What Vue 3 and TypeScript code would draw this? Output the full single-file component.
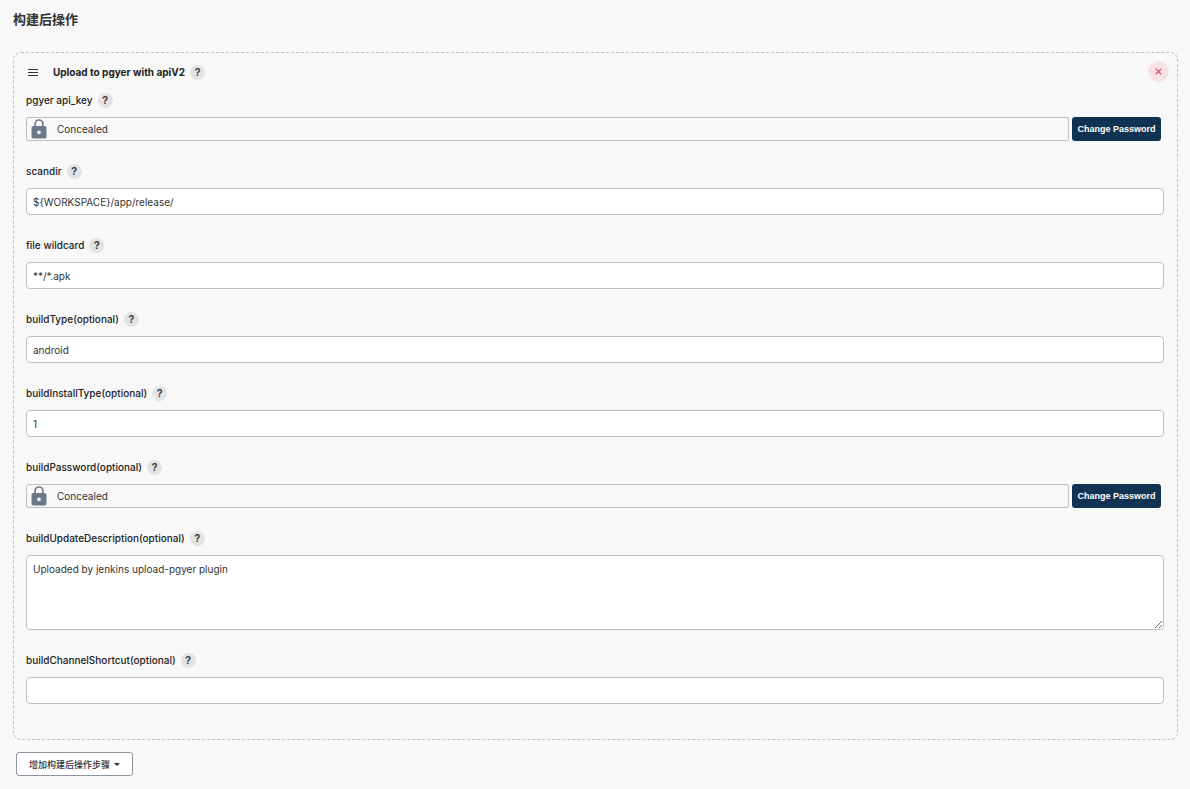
<script setup lang="ts">
import { reactive } from 'vue'

type FieldKind = 'text' | 'secret' | 'textarea'

interface Field {
  id: string
  label: string
  kind: FieldKind
  value: string
}

const fields = reactive<Field[]>([
  { id: 'api-key', label: 'pgyer api_key', kind: 'secret', value: '' },
  { id: 'scandir', label: 'scandir', kind: 'text', value: '${WORKSPACE}/app/release/' },
  { id: 'wildcard', label: 'file wildcard', kind: 'text', value: '**/*.apk' },
  { id: 'build-type', label: 'buildType(optional)', kind: 'text', value: 'android' },
  { id: 'install-type', label: 'buildInstallType(optional)', kind: 'text', value: '1' },
  { id: 'build-password', label: 'buildPassword(optional)', kind: 'secret', value: '' },
  {
    id: 'update-description',
    label: 'buildUpdateDescription(optional)',
    kind: 'textarea',
    value: 'Uploaded by jenkins upload-pgyer plugin',
  },
  { id: 'channel-shortcut', label: 'buildChannelShortcut(optional)', kind: 'text', value: '' },
])
</script>

<template>
  <main class="page">
    <h1 class="page-title">构建后操作</h1>

    <section class="step">
      <header class="step-header">
        <svg class="handle" viewBox="0 0 10 7" aria-hidden="true">
          <path d="M0 .5h10M0 3.5h10M0 6.5h10" stroke="#333" stroke-width="1" />
        </svg>
        <h2 class="step-title">Upload to pgyer with apiV2</h2>
        <button type="button" class="help">?</button>
        <button type="button" class="remove" aria-label="Remove">
          <svg viewBox="0 0 7 7" aria-hidden="true">
            <path d="M.7 .7l5.6 5.6M6.3 .7L.7 6.3" stroke="#dc4450" stroke-width="1.2" />
          </svg>
        </button>
      </header>

      <div v-for="field in fields" :key="field.id" class="field">
        <div class="field-head">
          <label class="field-label" :for="field.id">{{ field.label }}</label>
          <button type="button" class="help">?</button>
        </div>

        <div v-if="field.kind === 'secret'" class="secret">
          <div class="secret-box">
            <svg class="lock" viewBox="0 0 16 20" aria-hidden="true">
              <path
                d="M4.1 8V4.9a3.9 3.9 0 0 1 7.8 0V8"
                fill="none"
                stroke="#6b7889"
                stroke-width="1.6"
              />
              <path
                fill="#6b7889"
                fill-rule="evenodd"
                d="M2.5 7h11a2 2 0 0 1 2 2v8.5a2 2 0 0 1-2 2h-11a2 2 0 0 1-2-2V9a2 2 0 0 1 2-2zM8 11.4a1.9 1.9 0 1 0 0 3.8 1.9 1.9 0 0 0 0-3.8z"
              />
            </svg>
            <span>Concealed</span>
          </div>
          <button :id="field.id" type="button" class="change">Change Password</button>
        </div>
        <textarea
          v-else-if="field.kind === 'textarea'"
          :id="field.id"
          v-model="field.value"
          class="control area"
          spellcheck="false"
        ></textarea>
        <input v-else :id="field.id" v-model="field.value" class="control" type="text" />
      </div>
    </section>

    <button type="button" class="add-step">
      增加构建后操作步骤
      <svg class="caret" viewBox="0 0 6 3" aria-hidden="true">
        <path d="M0 0h6L3 3z" fill="#333" />
      </svg>
    </button>
  </main>
</template>

<style>
body {
  margin: 0;
  background: #f8f8f8;
}
</style>

<style scoped>
.page {
  box-sizing: border-box;
  padding: 10px 12px 13px 13px;
  color: #333;
  font-family: Inter, 'Liberation Sans', 'Noto Sans CJK SC', sans-serif;
  font-size: 10px;
  line-height: 15px;
}

.page-title {
  margin: 0 0 24px;
  font-size: 13px;
  line-height: 18px;
  font-weight: 700;
}

button,
input,
textarea {
  box-sizing: border-box;
  margin: 0;
  font: inherit;
  color: inherit;
}

.step {
  padding: 12px 13px 35px 12px;
  border: 1px dashed #bcc1c9;
  border-radius: 8px;
}

.step-header {
  position: relative;
  display: flex;
  align-items: center;
  height: 15px;
  margin-bottom: 13px;
}

.handle {
  width: 10px;
  height: 7px;
  margin: 0 15px 0 2px;
}

.step-title {
  margin: 0;
  color: #222;
  font-size: 10px;
  line-height: 15px;
  font-weight: 700;
}

.help {
  flex: none;
  width: 15px;
  height: 15px;
  margin-left: 5px;
  padding: 0;
  border: 0;
  border-radius: 50%;
  background: #e3e3e3;
  font-family: 'Liberation Sans', sans-serif;
  font-size: 10px;
  line-height: 15px;
  font-weight: 700;
  text-align: center;
}

.remove {
  position: absolute;
  top: -4px;
  right: -5px;
  display: flex;
  align-items: center;
  justify-content: center;
  width: 21px;
  height: 21px;
  padding: 0;
  border: 0;
  border-radius: 50%;
  background: #f7e3e5;
}

.remove svg {
  width: 7px;
  height: 7px;
}

.field + .field {
  margin-top: 23px;
}

.field-head {
  display: flex;
  align-items: center;
  margin-bottom: 9px;
}

.field-label {
  color: #222;
  font-weight: 500;
}

.control {
  display: block;
  width: 100%;
  height: 27px;
  padding: 1px 6px 0;
  border: 1px solid #bcbfc6;
  border-radius: 4px;
  background: #fff;
}

.area {
  height: 75px;
  padding-top: 6px;
  resize: vertical;
}

.secret {
  display: flex;
  gap: 3px;
  margin-right: 3px;
}

.secret-box {
  box-sizing: border-box;
  display: flex;
  flex: 1;
  align-items: center;
  gap: 10px;
  height: 24px;
  padding-left: 4px;
  border: 1px solid #bcbfc6;
  border-radius: 2px;
}

.lock {
  width: 16px;
  height: 20px;
}

.change {
  min-width: 89px;
  height: 24px;
  padding: 0 5px;
  border: 0;
  border-radius: 3px;
  background: #113353;
  color: #fff;
  font-family: 'Liberation Sans', sans-serif;
  font-size: 9px;
  font-weight: 700;
}

.add-step {
  display: flex;
  align-items: center;
  gap: 4px;
  height: 24px;
  margin: 12px 0 0 3px;
  padding: 0 12px;
  border: 1px solid #8d949f;
  border-radius: 3px;
  background: #fff;
  font-size: 9px;
  font-weight: 500;
}

.caret {
  width: 6px;
  height: 3px;
}
</style>
